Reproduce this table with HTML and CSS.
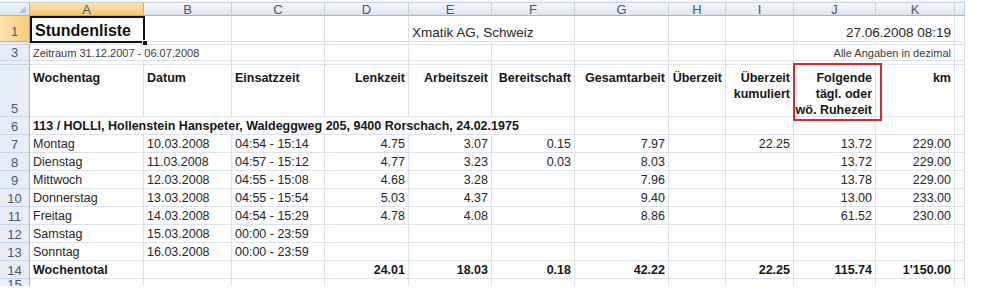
FILE: index.html
```html
<!DOCTYPE html>
<html lang="de">
<head>
<meta charset="utf-8">
<title>Stundenliste</title>
<link rel="stylesheet" href="styles.css">
</head>
<body>
<div class="frame">
  <div class="topstrip"></div>
  <div class="wrap">
    <div class="sheet">
      <!-- column headers -->
      <div class="corner"><span class="tri"></span></div>
      <div class="ch sel">A</div><div class="ch">B</div><div class="ch">C</div><div class="ch">D</div><div class="ch">E</div><div class="ch">F</div><div class="ch">G</div><div class="ch">H</div><div class="ch">I</div><div class="ch">J</div><div class="ch">K</div><div class="ch"></div>

      <!-- row 1 -->
      <div class="rh sel">1</div>
      <div class="c title">Stundenliste</div><div class="c"></div><div class="c"></div><div class="c"></div>
      <div class="c s2 big">Xmatik AG, Schweiz</div><div class="c"></div><div class="c"></div><div class="c"></div>
      <div class="c s2 r big">27.06.2008 08:19</div><div class="c"></div>

      <!-- row 2 -->
      <div class="rh clip"></div>
      <div class="c"></div><div class="c"></div><div class="c"></div><div class="c"></div><div class="c"></div><div class="c"></div><div class="c"></div><div class="c"></div><div class="c"></div><div class="c"></div><div class="c"></div><div class="c"></div>

      <!-- row 3 -->
      <div class="rh">3</div>
      <div class="c s2 small">Zeitraum 31.12.2007 - 06.07.2008</div><div class="c"></div><div class="c"></div><div class="c"></div><div class="c"></div><div class="c"></div><div class="c"></div><div class="c"></div>
      <div class="c s2 r small">Alle Angaben in dezimal</div><div class="c"></div>

      <!-- row 4 -->
      <div class="rh clip"></div>
      <div class="c dot"></div><div class="c dot"></div><div class="c dot"></div><div class="c dot"></div><div class="c dot"></div><div class="c dot"></div><div class="c dot"></div><div class="c dot"></div><div class="c dot"></div><div class="c dot"></div><div class="c dot"></div><div class="c dot"></div>

      <!-- row 5 -->
      <div class="rh">5</div>
      <div class="c hd">Wochentag</div>
      <div class="c hd">Datum</div>
      <div class="c hd">Einsatzzeit</div>
      <div class="c hd r">Lenkzeit</div>
      <div class="c hd r">Arbeitszeit</div>
      <div class="c hd r">Bereitschaft</div>
      <div class="c hd r">Gesamtarbeit</div>
      <div class="c hd r">Überzeit</div>
      <div class="c hd r">Überzeit<br>kumuliert</div>
      <div class="c hd r">Folgende<br>tägl. oder<br>wö. Ruhezeit</div>
      <div class="c hd r">km</div>
      <div class="c"></div>

      <!-- row 6 -->
      <div class="rh">6</div>
      <div class="c s6 b">113 / HOLLI, Hollenstein Hanspeter, Waldeggweg 205, 9400 Rorschach, 24.02.1975</div>
      <div class="c"></div><div class="c"></div><div class="c"></div><div class="c"></div><div class="c"></div><div class="c"></div>

      <!-- row 7 -->
      <div class="rh">7</div>
      <div class="c">Montag</div><div class="c">10.03.2008</div><div class="c">04:54 - 15:14</div>
      <div class="c r">4.75</div><div class="c r">3.07</div><div class="c r">0.15</div><div class="c r">7.97</div><div class="c"></div><div class="c r">22.25</div><div class="c r">13.72</div><div class="c r">229.00</div><div class="c"></div>

      <!-- row 8 -->
      <div class="rh">8</div>
      <div class="c">Dienstag</div><div class="c">11.03.2008</div><div class="c">04:57 - 15:12</div>
      <div class="c r">4.77</div><div class="c r">3.23</div><div class="c r">0.03</div><div class="c r">8.03</div><div class="c"></div><div class="c"></div><div class="c r">13.72</div><div class="c r">229.00</div><div class="c"></div>

      <!-- row 9 -->
      <div class="rh">9</div>
      <div class="c">Mittwoch</div><div class="c">12.03.2008</div><div class="c">04:55 - 15:08</div>
      <div class="c r">4.68</div><div class="c r">3.28</div><div class="c"></div><div class="c r">7.96</div><div class="c"></div><div class="c"></div><div class="c r">13.78</div><div class="c r">229.00</div><div class="c"></div>

      <!-- row 10 -->
      <div class="rh">10</div>
      <div class="c">Donnerstag</div><div class="c">13.03.2008</div><div class="c">04:55 - 15:54</div>
      <div class="c r">5.03</div><div class="c r">4.37</div><div class="c"></div><div class="c r">9.40</div><div class="c"></div><div class="c"></div><div class="c r">13.00</div><div class="c r">233.00</div><div class="c"></div>

      <!-- row 11 -->
      <div class="rh">11</div>
      <div class="c">Freitag</div><div class="c">14.03.2008</div><div class="c">04:54 - 15:29</div>
      <div class="c r">4.78</div><div class="c r">4.08</div><div class="c"></div><div class="c r">8.86</div><div class="c"></div><div class="c"></div><div class="c r">61.52</div><div class="c r">230.00</div><div class="c"></div>

      <!-- row 12 -->
      <div class="rh">12</div>
      <div class="c">Samstag</div><div class="c">15.03.2008</div><div class="c">00:00 - 23:59</div>
      <div class="c"></div><div class="c"></div><div class="c"></div><div class="c"></div><div class="c"></div><div class="c"></div><div class="c"></div><div class="c"></div><div class="c"></div>

      <!-- row 13 -->
      <div class="rh">13</div>
      <div class="c">Sonntag</div><div class="c">16.03.2008</div><div class="c">00:00 - 23:59</div>
      <div class="c"></div><div class="c"></div><div class="c"></div><div class="c"></div><div class="c"></div><div class="c"></div><div class="c"></div><div class="c"></div><div class="c"></div>

      <!-- row 14 -->
      <div class="rh">14</div>
      <div class="c b">Wochentotal</div><div class="c"></div><div class="c"></div>
      <div class="c r b">24.01</div><div class="c r b">18.03</div><div class="c r b">0.18</div><div class="c r b">42.22</div><div class="c"></div><div class="c r b">22.25</div><div class="c r b">115.74</div><div class="c r b">1'150.00</div><div class="c"></div>

      <!-- row 15 -->
      <div class="rh clip top">15</div>
      <div class="c"></div><div class="c"></div><div class="c"></div><div class="c"></div><div class="c"></div><div class="c"></div><div class="c"></div><div class="c"></div><div class="c"></div><div class="c"></div><div class="c"></div><div class="c"></div>
    </div>
    <div class="selection"><span class="handle"></span></div>
    <div class="mark"></div>
  </div>
</div>
</body>
</html>
```
FILE: styles.css
```css
* { box-sizing: border-box; }
html, body { margin: 0; padding: 0; background: #ffffff; }
body {
  font-family: "Liberation Sans", Arial, sans-serif;
  color: #262626;
}
.frame {
  width: 965px;
  height: 286px;
  overflow: hidden;
  background: #ffffff;
}
.topstrip {
  height: 3px;
  background: #f4f6fa;
  border-bottom: 1px solid #c8d4e4;
}
.wrap { position: relative; }
.sheet {
  display: grid;
  grid-template-columns: 30px 114px 88px 93px 84px 83px 83px 94px 57px 68px 82px 79px 10px;
  grid-template-rows: 13px 26px 3px 16px 4px 52px 18px repeat(8, 18px) 8px;
}
.corner {
  position: relative;
  background: linear-gradient(#eef2f8, #dbe4f1);
  border-right: 1px solid #9eb6ce;
  border-bottom: 1px solid #9eb6ce;
}
.tri {
  position: absolute;
  right: 3px;
  bottom: 2px;
  width: 0;
  height: 0;
  border-left: 7px solid transparent;
  border-bottom: 7px solid #b5c4d8;
}
.ch {
  display: flex;
  align-items: center;
  justify-content: center;
  font-size: 13px;
  line-height: 13px;
  color: #4a5870;
  background: linear-gradient(#f3f6fb, #dee6f2);
  border-right: 1px solid #c3d0e2;
  border-bottom: 1px solid #9eb6ce;
}
.ch.sel { background: linear-gradient(#fbe3ad, #f6c96f); border-right-color: #e2b45a; border-bottom-color: #e2a43c; }
.rh {
  display: flex;
  align-items: flex-end;
  justify-content: center;
  font-size: 13px;
  line-height: 15px;
  padding-bottom: 0;
  color: #4a5870;
  background: #e6edf7;
  border-right: 1px solid #9eb6ce;
  border-bottom: 1px solid #c9d6e8;
  overflow: hidden;
}
.rh.sel { background: linear-gradient(90deg, #fbe3ad, #f6cd7a); border-bottom-color: #e2b45a; border-right-color: #e2a43c; padding-bottom: 2px; }
.rh.clip { padding: 0; }
.rh.top { align-items: flex-start; line-height: 12px; }
.c {
  display: flex;
  align-items: flex-end;
  padding: 0 3px;
  font-size: 12.5px;
  line-height: 15px;
  white-space: nowrap;
  border-right: 1px solid #dce2ec;
  border-bottom: 1px solid #dce2ec;
  min-width: 0;
  min-height: 0;
}
.c.dot { border-bottom: 1px dotted #c6cedb; }
.r { justify-content: flex-end; text-align: right; }
.b { font-weight: bold; color: #161616; }
.s2 { grid-column: span 2; }
.s6 { grid-column: span 6; }
.title { font-size: 16px; line-height: 18px; font-weight: bold; color: #111; padding-left: 5px; padding-bottom: 1px; }
.big { font-size: 13.5px; padding-bottom: 1px; }
.small { font-size: 11px; line-height: 13px; color: #3a3a3a; }
.hd {
  align-items: flex-start;
  padding-top: 5px;
  font-weight: bold;
  line-height: 16px;
  color: #161616;
}
.selection {
  position: absolute;
  left: 30px;
  top: 13px;
  width: 115px;
  height: 27px;
  border: 2px solid #111;
  pointer-events: none;
}
.handle {
  position: absolute;
  right: -5px;
  bottom: -5px;
  width: 6px;
  height: 6px;
  background: #111;
  border: 1px solid #fff;
}
.mark {
  position: absolute;
  left: 793px;
  top: 60px;
  width: 89px;
  height: 58px;
  border: 2px solid #e3262b;
  pointer-events: none;
}
```
